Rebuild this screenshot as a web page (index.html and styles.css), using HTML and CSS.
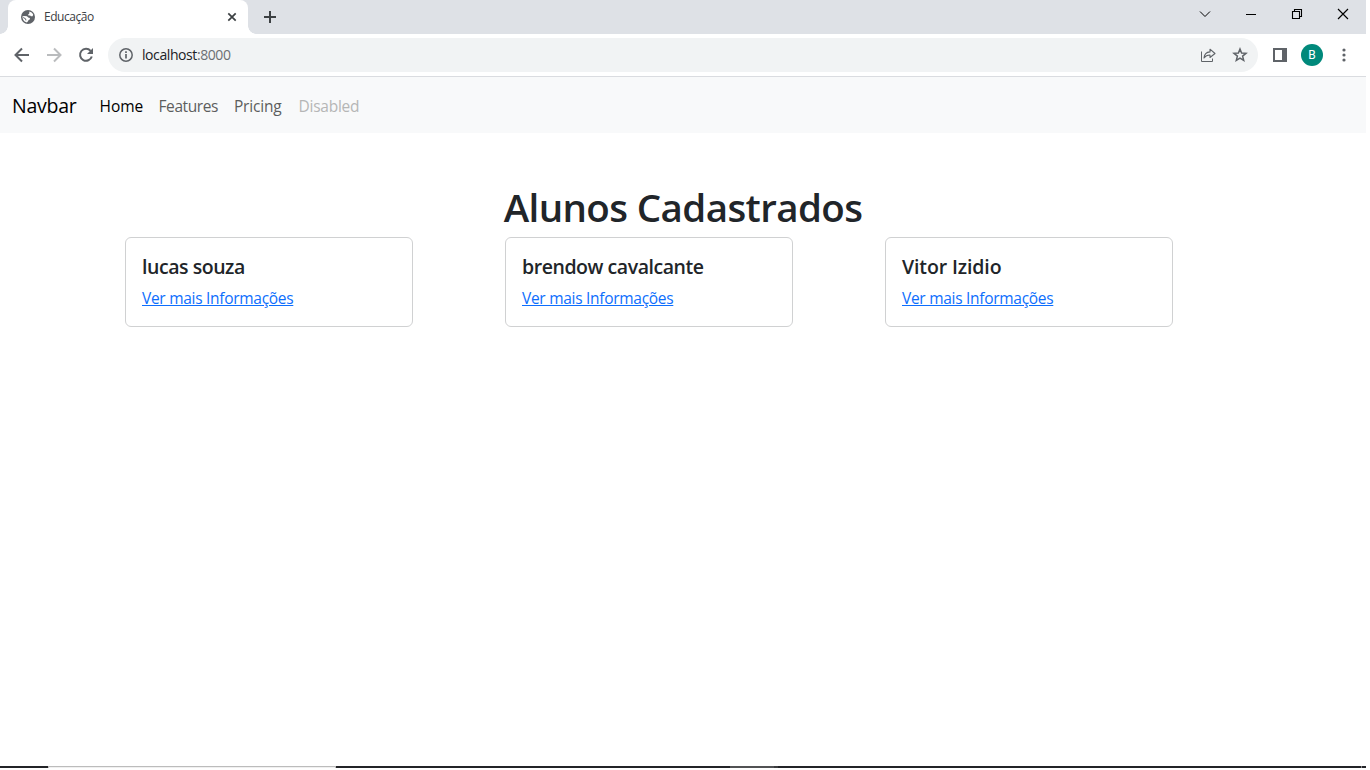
FILE: index.html
```html
<!DOCTYPE html>
<html lang="pt-br">
<head>
<meta charset="utf-8">
<title>Educação</title>
<link rel="stylesheet" href="styles.css">
</head>
<body>
<div class="window">
  <div class="tabstrip">
    <div class="tab">
      <svg class="globe" width="14" height="14" viewBox="0 0 14 14"><circle cx="7" cy="7" r="7" fill="#5f6368"/><path d="M8.300 1.500C10 1.900 11.500 3 12.200 4.600L11.600 6.300H9.900L9.200 5.500H7.500L7 4.700 8.300 3.600Z" fill="#fff"/><path d="M1.500 6.300L3.500 6.100 6 6.200 7.200 7.500 8.800 7.900 9 9.200 7.600 10 7 11.200 5.800 12.400C3.500 12 1.300 9.800 1.500 6.300Z" fill="#fff"/><path d="M2.200 7.500L4.600 8.800 4.900 10.400" fill="none" stroke="#5f6368" stroke-width="1"/></svg>
      <span class="tab-title">Educação</span>
      <svg class="tab-close" width="10" height="10" viewBox="0 0 10 10"><path d="M1.300 1.300L8.700 8.700M8.700 1.300L1.300 8.700" stroke="#3c4043" stroke-width="1.700"/></svg>
    </div>
    <svg class="new-tab" width="12" height="12" viewBox="0 0 12 12"><path d="M6 0V12M0 6H12" stroke="#3c4043" stroke-width="2"/></svg>
    <div class="window-buttons">
      <svg width="46" height="28" viewBox="0 0 46 28"><path d="M18 11.500L23 16.500 28 11.500" fill="none" stroke="#000"/></svg>
      <svg width="46" height="28" viewBox="0 0 46 28"><path d="M18 14.500H28" stroke="#000"/></svg>
      <svg width="46" height="28" viewBox="0 0 46 28"><path d="M18.500 11.500H25.500V18.500H18.500ZM20.500 11.500V9.500H27.500V16.500H25.500" fill="none" stroke="#000" stroke-width="1.100"/></svg>
      <svg width="46" height="28" viewBox="0 0 46 28"><path d="M18 9L28 19M28 9L18 19" stroke="#000" stroke-width="1.150"/></svg>
    </div>
  </div>
  <div class="toolbar">
    <svg class="tool" width="32" height="32" viewBox="0 0 32 32"><path d="M23 16H10M16 9.500L9.500 16 16 22.500" fill="none" stroke="#5f6368" stroke-width="2"/></svg>
    <svg class="tool" width="32" height="32" viewBox="0 0 32 32"><path d="M9 16H22M16 9.500L22.500 16 16 22.500" fill="none" stroke="#babcbe" stroke-width="2"/></svg>
    <svg class="tool" width="32" height="32" viewBox="0 0 32 32"><path d="M20.600 11.800A6 6 0 1 0 21.800 17.500" fill="none" stroke="#5f6368" stroke-width="2"/><path d="M23 9V15H17Z" fill="#5f6368"/></svg>
    <div class="omnibox">
      <svg width="14" height="14" viewBox="0 0 14 14"><circle cx="7" cy="7" r="6.200" fill="none" stroke="#5f6368" stroke-width="1.500"/><path d="M7 6V10.600M7 3.300V5" stroke="#5f6368" stroke-width="1.700"/></svg>
      <span class="url">localhost<span class="port">:8000</span></span>
      <svg class="share" width="16" height="16" viewBox="0 0 16 16"><path d="M1.500 4.500V14.500H12.500V11.500" fill="none" stroke="#5f6368" stroke-width="1"/><path d="M4 11C4.300 7.300 6.500 5.200 10 4.900V2.200L15 6.500 10 10.500V8C7.500 7.900 5.600 8.800 4 11Z" fill="none" stroke="#5f6368" stroke-width="1.100" stroke-linejoin="round"/></svg>
      <svg class="star" width="16" height="16" viewBox="0 0 16 16"><path d="M8 2L9.600 6 14 6.300 10.600 9.100 11.700 13.400 8 11.100 4.300 13.400 5.400 9.100 2 6.300 6.400 6Z" fill="none" stroke="#5f6368" stroke-width="1.500"/></svg>
    </div>
    <svg class="panel" width="14" height="14" viewBox="0 0 14 14"><path d="M1 1H13V13H1Z" fill="none" stroke="#5f6368" stroke-width="2"/><path d="M9 0H14V14H9Z" fill="#5f6368"/></svg>
    <span class="avatar">B</span>
    <svg class="dots" width="4" height="14" viewBox="0 0 4 14" fill="#5f6368"><circle cx="2" cy="2" r="1.600"/><circle cx="2" cy="7" r="1.600"/><circle cx="2" cy="12" r="1.600"/></svg>
  </div>
  <nav class="navbar">
    <a class="brand">Navbar</a>
    <a class="nav-link home">Home</a>
    <a class="nav-link features">Features</a>
    <a class="nav-link pricing">Pricing</a>
    <a class="nav-link disabled">Disabled</a>
  </nav>
  <main class="content">
    <h1 class="title"><span>Alunos Cadastrados</span></h1>
    <div class="cards">
      <div class="card"><h5 class="name lucas">lucas souza</h5><a class="more" href="#">Ver mais Informações</a></div>
      <div class="card"><h5 class="name brendow">brendow cavalcante</h5><a class="more" href="#">Ver mais Informações</a></div>
      <div class="card"><h5 class="name vitor">Vitor Izidio</h5><a class="more" href="#">Ver mais Informações</a></div>
    </div>
  </main>
  <div class="taskbar"><div class="task-search"></div><div class="task-active"></div><div class="task-edge"></div><div class="show-desktop"></div></div>
</div>
</body>
</html>
```
FILE: styles.css
```css
* { box-sizing: border-box; }
body { margin: 0; background: #fff; font-family: "Open Sans", "Noto Sans", sans-serif; }
svg { display: block; flex: none; }
.window { width: 1366px; height: 768px; display: flex; flex-direction: column; background: #fff; overflow: hidden; }
.tabstrip { height: 34px; flex: none; display: flex; background: #dee1e6; padding-left: 8px; }
.tab { position: relative; width: 240px; height: 34px; background: #fff; border-radius: 8px 8px 0 0; display: flex; align-items: center; padding: 0 11px 0 13px; }
.tab::before, .tab::after { content: ""; position: absolute; bottom: 0; width: 8px; height: 8px; }
.tab::before { left: -8px; background: radial-gradient(circle at 0 0, #dee1e6 7.500px, #fff 8px); }
.tab::after { right: -8px; background: radial-gradient(circle at 100% 0, #dee1e6 7.500px, #fff 8px); }
.tab-title { margin-left: 9px; font-size: 12px; line-height: 16px; letter-spacing: -0.450px; color: #3c4043; }
.tab-close { margin-left: auto; }
.new-tab { margin: 11px 0 0 16px; }
.window-buttons { margin-left: auto; display: flex; }
.toolbar { height: 43px; flex: none; display: flex; align-items: center; padding: 0 20px 1px 6px; border-bottom: 1px solid #dadce0; }
.omnibox { width: 1150px; height: 34px; margin-left: 6px; border-radius: 17px; background: #f1f3f4; display: flex; align-items: center; padding: 0 10px 0 11px; }
.url { margin-left: 9px; font-size: 14px; line-height: 20px; letter-spacing: -0.420px; color: #202124; }
.port { color: #6b6f73; }
.share { margin-left: auto; }
.star { margin-left: 16px; }
.panel { margin-left: 15px; }
.avatar { flex: none; width: 22px; height: 22px; margin-left: 14px; border-radius: 50%; background: #00897b; color: #fff; font: 12px/22px Roboto, sans-serif; text-align: center; }
.dots { margin-left: auto; }
.navbar { height: 56px; flex: none; display: flex; align-items: center; padding: 2px 12px 0; background: #f8f9fa; font-size: 15.500px; line-height: 24px; }
.brand { width: 87.500px; font-size: 19.500px; line-height: 30px; letter-spacing: -0.250px; color: #000; }
.nav-link { white-space: nowrap; color: #5d5e5e; }
.home { width: 59px; letter-spacing: -0.050px; color: #000; }
.features { width: 75.500px; letter-spacing: -0.400px; }
.pricing { width: 64.500px; letter-spacing: -0.200px; }
.disabled { letter-spacing: -0.250px; color: #b5b6b6; }
.content { flex: 1; padding-top: 50px; }
.title { margin: 0; height: 48px; text-align: center; font-size: 38.500px; line-height: 48px; font-weight: 600; letter-spacing: -0.600px; color: #212529; }
.cards { display: grid; grid-template-columns: repeat(3, 380px); padding: 6px 0 0 125px; }
.card { width: 288px; height: 90px; padding: 17px 16px 15px; border: 1px solid #d0d1d2; border-radius: 6px; }
.name { margin: 0 0 7px; font-size: 19.500px; line-height: 24px; font-weight: 600; color: #212529; }
.lucas { letter-spacing: -0.450px; }
.brendow { letter-spacing: -0.450px; }
.vitor { letter-spacing: -0.120px; }
.more { display: block; width: max-content; font-size: 15.500px; line-height: 24px; letter-spacing: -0.290px; color: #0d6efd; text-decoration: underline; }
.taskbar { height: 2px; flex: none; display: flex; background: #232428; }
.task-search { width: 288px; margin-left: 48px; background: #f0f0f0; border: 1px solid #bcbcbc; border-bottom: 0; }
.task-active { width: 44px; margin-left: 394px; background: #515254; }
.task-edge { width: 4px; background: #3b3c3e; }
.show-desktop { width: 1px; margin: 0 4px 0 auto; background: #88898a; }
```
